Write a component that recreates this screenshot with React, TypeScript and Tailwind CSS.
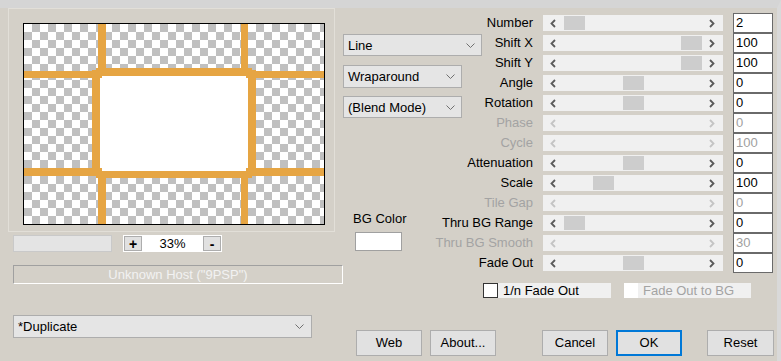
import React from 'react';

type Row = { label: string; value: string; thumb?: number; disabled?: boolean };

const ROWS: Row[] = [
  { label: 'Number', value: '2', thumb: 21 },
  { label: 'Shift X', value: '100', thumb: 138 },
  { label: 'Shift Y', value: '100', thumb: 138 },
  { label: 'Angle', value: '0', thumb: 80 },
  { label: 'Rotation', value: '0', thumb: 80 },
  { label: 'Phase', value: '0', disabled: true },
  { label: 'Cycle', value: '100', disabled: true },
  { label: 'Attenuation', value: '0', thumb: 80 },
  { label: 'Scale', value: '100', thumb: 50 },
  { label: 'Tile Gap', value: '0', disabled: true },
  { label: 'Thru BG Range', value: '0', thumb: 21 },
  { label: 'Thru BG Smooth', value: '30', disabled: true },
  { label: 'Fade Out', value: '0', thumb: 80 },
];

const ROW_START = [
  'row-start-1', 'row-start-2', 'row-start-3', 'row-start-4', 'row-start-5',
  'row-start-6', 'row-start-7', 'row-start-8', 'row-start-9', 'row-start-10',
  'row-start-11', 'row-start-12', 'row-start-13',
];

function Arrow({ dir, disabled }: { dir: 'l' | 'r'; disabled?: boolean }) {
  return (
    <svg width="6" height="9" viewBox="0 0 6 9" className="block">
      <polyline
        points={dir === 'l' ? '5,1 1.5,4.5 5,8' : '1,1 4.5,4.5 1,8'}
        fill="none"
        stroke={disabled ? '#c4c4c4' : '#5a5a5a'}
        strokeWidth={1.8}
      />
    </svg>
  );
}

function Chevron() {
  return (
    <svg width="9" height="5" viewBox="0 0 9 5" className="block">
      <polyline points="0.5,0.5 4.5,4.5 8.5,0.5" fill="none" stroke="#707070" strokeWidth={1} />
    </svg>
  );
}

function Select({ text, className }: { text: string; className: string }) {
  return (
    <div
      className={`flex items-center justify-between bg-[#e5e5e5] border border-[#adadad] pl-[4px] pr-[6px] ${className}`}
    >
      <span className="leading-none">{text}</span>
      <Chevron />
    </div>
  );
}

function Preview() {
  return (
    <svg width="300" height="200" className="block">
      <defs>
        <pattern id="chk" width="16" height="16" patternUnits="userSpaceOnUse">
          <rect width="16" height="16" fill="#ffffff" />
          <rect x="8" width="8" height="8" fill="#c0c0c0" />
          <rect y="8" width="8" height="8" fill="#c0c0c0" />
        </pattern>
      </defs>
      <rect width="300" height="200" fill="url(#chk)" />
      <rect x="75" y="52" width="150" height="96" fill="#ffffff" />
      <g fill="#e6a543">
        {/* horizontals */}
        <rect x="0" y="47" width="78" height="7" />
        <rect x="72" y="44" width="156" height="8" />
        <rect x="222" y="47" width="78" height="7" />
        <rect x="0" y="144" width="78" height="8" />
        <rect x="72" y="147" width="156" height="7" />
        <rect x="222" y="144" width="78" height="8" />
        {/* verticals */}
        <rect x="74" y="0" width="8" height="50" />
        <rect x="68" y="46" width="8" height="106" />
        <rect x="74" y="150" width="8" height="50" />
        <rect x="217" y="0" width="7" height="50" />
        <rect x="224" y="46" width="8" height="106" />
        <rect x="217" y="150" width="7" height="50" />
      </g>
    </svg>
  );
}

function Button({
  label,
  className,
  primary,
}: {
  label: string;
  className: string;
  primary?: boolean;
}) {
  return (
    <div
      className={`h-[26px] flex items-center justify-center bg-[#e1e1e1] ${
        primary ? 'border-2 border-[#0078d7]' : 'border border-[#adadad]'
      } ${className}`}
    >
      {label}
    </div>
  );
}

export default function App() {
  return (
    <div className="w-[781px] h-[361px] box-border flex bg-[#d4d0c8] border-t-[8px] border-t-[#d5d5d5] border-r-[4px] border-r-[#d9d9d9] font-['Liberation_Sans',Arial,sans-serif] text-[13px] text-black overflow-hidden">
      {/* Left: preview + zoom + host + preset */}
      <div className="w-[343px] shrink-0 pl-[8px] flex flex-col">
        <div className="w-[327px] h-[224px] border border-[#e2dfd8] pl-[14px] pt-[14px]">
          <div className="w-[302px] h-[202px] border border-black">
            <Preview />
          </div>
        </div>

        <div className="flex mt-[3px] ml-[5px]">
          <div className="w-[99px] h-[17px] bg-[#e4e4e4] border border-[#c9c9c9]" />
          <div className="ml-[11px] w-[99px] h-[17px] flex bg-white border border-white">
            <div className="w-[18px] h-full flex items-center justify-center bg-[#e1e1e1] border border-[#adadad] font-bold text-[14px] leading-none">
              +
            </div>
            <div className="flex-1 flex items-center justify-center leading-none">33%</div>
            <div className="w-[18px] h-full flex items-center justify-center bg-[#e1e1e1] border border-[#adadad] font-bold text-[14px] leading-none">
              -
            </div>
          </div>
        </div>

        <div className="mt-[13px] ml-[5px] w-[330px] h-[19px] flex items-center justify-center border border-t-[#a0a0a0] border-l-[#a0a0a0] border-b-white border-r-white text-[#f2f2f2]">
          Unknown Host ("9PSP")
        </div>

        <Select text="*Duplicate" className="mt-[31px] ml-[5px] w-[299px] h-[23px] pr-[7px]" />
      </div>

      {/* Right: parameters */}
      <div className="flex-1 flex flex-col">
        <div className="mt-[5px] grid grid-cols-[190px_180px_40px] grid-rows-[repeat(13,20px)] gap-x-[10px]">
          {ROWS.map((r, i) => (
            <React.Fragment key={r.label}>
              <div
                className={`${ROW_START[i]} col-start-1 flex items-center justify-end whitespace-nowrap ${
                  r.disabled ? 'text-[#a3a3a3]' : 'text-black'
                }`}
              >
                {r.label}
              </div>
              <div className={`${ROW_START[i]} col-start-2 flex items-center`}>
                <div className="relative w-full h-[16px] bg-[#f0f0f0] flex items-center justify-between pl-[7px] pr-[8px]">
                  <Arrow dir="l" disabled={r.disabled} />
                  {r.thumb !== undefined && (
                    <div
                      className="absolute top-[1px] w-[21px] h-[14px] bg-[#cdcdcd]"
                      style={{ left: r.thumb }}
                    />
                  )}
                  <Arrow dir="r" disabled={r.disabled} />
                </div>
              </div>
              <div
                className={`${ROW_START[i]} col-start-3 h-[20px] bg-white border border-[#6a6a6a] pl-[2px] leading-[18px] ${
                  r.disabled ? 'text-[#a0a0a0]' : 'text-black'
                }`}
              >
                {r.value}
              </div>
            </React.Fragment>
          ))}

          <Select text="Line" className="row-start-2 col-start-1 self-start mt-[1px] w-[139px] h-[22px] pr-[5px]" />
          <Select text="Wraparound" className="row-start-3 col-start-1 self-start mt-[12px] w-[119px] h-[23px]" />
          <Select text="(Blend Mode)" className="row-start-5 col-start-1 self-start mt-[3px] w-[119px] h-[22px]" />

          <div className="row-start-11 row-span-2 col-start-1 self-start flex flex-col">
            <div className="-mt-[2px] ml-[10px] leading-[16px]">BG Color</div>
            <div className="mt-[5px] ml-[12px] w-[47px] h-[19px] bg-white border border-[#a0a0a0]" />
          </div>
        </div>

        <div className="mt-[10px] ml-[140px] flex">
          <div className="w-[15px] h-[15px] bg-white border border-[#333333]" />
          <div className="w-[113px] h-[15px] bg-[#f0f0f0] pl-[5px] leading-[15px]">1/n Fade Out</div>
          <div className="ml-[13px] w-[14px] h-[15px] bg-white" />
          <div className="w-[113px] h-[15px] bg-[#f0f0f0] pl-[5px] leading-[15px] text-[#a3a3a3]">
            Fade Out to BG
          </div>
        </div>

        <div className="mt-[32px] ml-[13px] flex">
          <Button label="Web" className="w-[66px]" />
          <Button label="About..." className="ml-[8px] w-[66px]" />
          <Button label="Cancel" className="ml-[46px] w-[66px]" />
          <Button label="OK" className="ml-[8px] w-[66px]" primary />
          <Button label="Reset" className="ml-[25px] w-[67px]" />
        </div>
      </div>
    </div>
  );
}
